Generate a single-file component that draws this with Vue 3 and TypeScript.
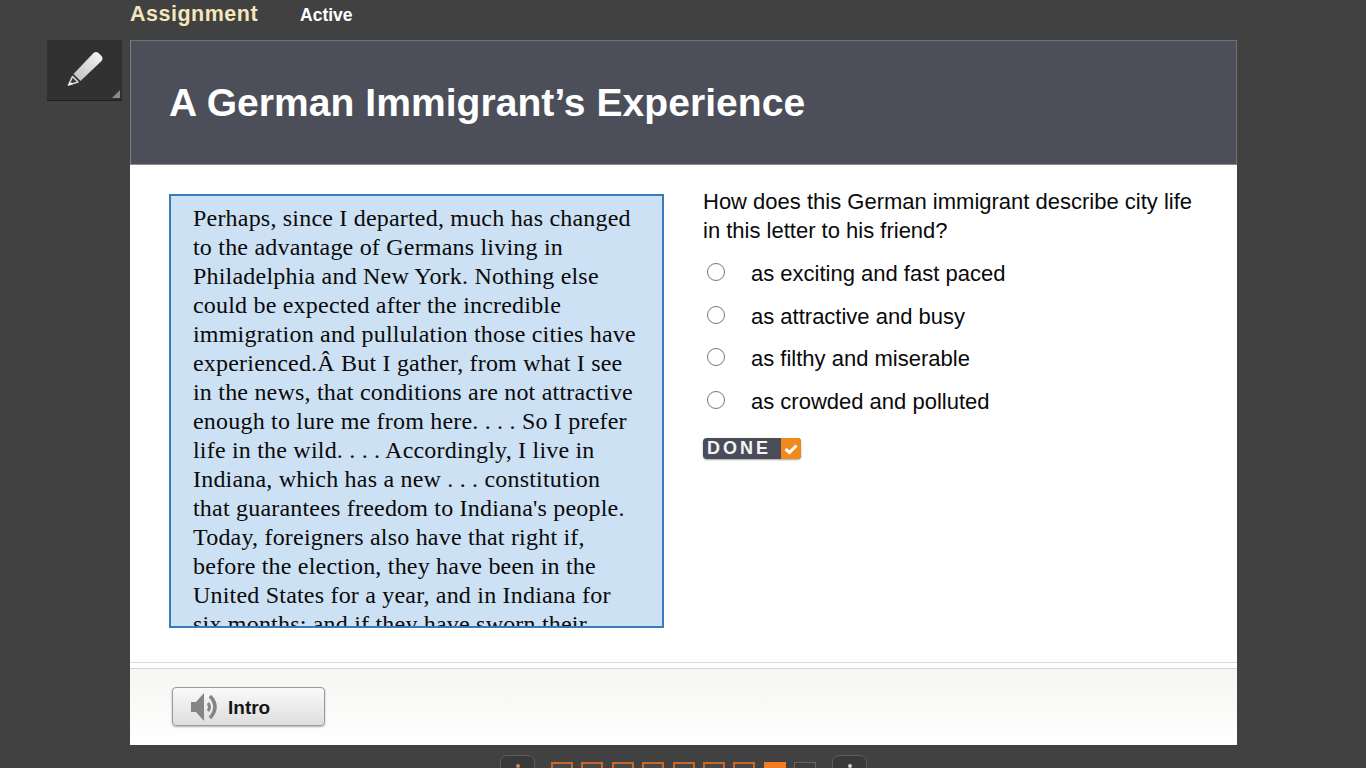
<script setup lang="ts">
const passage = [
  'Perhaps, since I departed, much has changed',
  'to the advantage of Germans living in',
  'Philadelphia and New York. Nothing else',
  'could be expected after the incredible',
  'immigration and pullulation those cities have',
  'experienced.Â But I gather, from what I see',
  'in the news, that conditions are not attractive',
  'enough to lure me from here. . . . So I prefer',
  'life in the wild. . . . Accordingly, I live in',
  'Indiana, which has a new . . . constitution',
  "that guarantees freedom to Indiana's people.",
  'Today, foreigners also have that right if,',
  'before the election, they have been in the',
  'United States for a year, and in Indiana for',
  'six months; and if they have sworn their',
]

const options = [
  'as exciting and fast paced',
  'as attractive and busy',
  'as filthy and miserable',
  'as crowded and polluted',
]

const pages = [1, 2, 3, 4, 5, 6, 7, 8, 9]
const currentPage = 8
</script>

<template>
  <div class="page">
    <div class="topbar">
      <span class="topbar-title">Assignment</span>
      <span class="topbar-status">Active</span>
    </div>

    <div class="stage">
      <div class="rail">
        <button type="button" class="tool" aria-label="Notes">
          <svg width="40" height="40" viewBox="0 0 40 40" aria-hidden="true">
            <defs>
              <linearGradient id="pencil-body" x1="0" y1="1" x2="1" y2="0">
                <stop offset="0" stop-color="#bdbdbd" />
                <stop offset="1" stop-color="#f8f8f8" />
              </linearGradient>
            </defs>
            <path d="M8.500 25 L28.500 4 Q31 1.800 33.500 4 L36.500 7 Q38.500 9.500 36.500 12 L15.500 32 Z" fill="url(#pencil-body)" />
            <path d="M7.500 27.500 L13 33 L3.500 36 Z" fill="#3a3a3a" stroke="#d8d8d8" stroke-width="1.600" stroke-linejoin="round" />
            <path d="M2.500 36.500 L6 33 L7.500 35.500 Z" fill="#eee" />
          </svg>
          <span class="tool-corner"></span>
        </button>
      </div>

      <main class="card">
        <header class="card-header">
          <h1>A German Immigrant’s Experience</h1>
        </header>

        <section class="card-body">
          <div class="passage">
            <p v-for="line in passage" :key="line">{{ line }}</p>
          </div>

          <div class="question">
            <p class="prompt">How does this German immigrant describe city life in this letter to his friend?</p>
            <label v-for="option in options" :key="option" class="option">
              <input type="radio" name="answer" />
              <span>{{ option }}</span>
            </label>
            <button type="button" class="done">
              <span class="done-label">DONE</span>
              <span class="done-check">
                <svg width="14" height="12" viewBox="0 0 14 12" aria-hidden="true">
                  <path d="M1.500 6 L5.500 9.500 L12.500 2.500" fill="none" stroke="#fff" stroke-width="3" />
                </svg>
              </span>
            </button>
          </div>
        </section>

        <footer class="card-footer">
          <button type="button" class="intro">
            <svg width="30" height="30" viewBox="0 0 30 30" aria-hidden="true">
              <path d="M1 10 H6 L14 1 V29 L6 20 H1 Z" fill="#858585" />
              <path d="M18 11 Q21 15 18 19" fill="none" stroke="#858585" stroke-width="3" />
              <path d="M20 4 Q30 15 20 26" fill="none" stroke="#858585" stroke-width="3.500" />
            </svg>
            <span class="intro-label">Intro</span>
          </button>
        </footer>
      </main>
    </div>

    <nav class="pager">
      <button type="button" class="pager-arrow" aria-label="Previous"><span class="dot dot-orange"></span></button>
      <div class="pager-pages">
        <span
          v-for="n in pages"
          :key="n"
          class="pager-page"
          :class="{ filled: n === currentPage, empty: n > currentPage }"
        ></span>
      </div>
      <button type="button" class="pager-arrow" aria-label="Next"><span class="dot"></span></button>
    </nav>
  </div>
</template>

<style>
html,
body {
  margin: 0;
  height: 100%;
  overflow: hidden;
  background: #414141;
}
</style>

<style scoped>
.page {
  height: 768px;
  overflow: hidden;
  background: #414141;
  font-family: "Liberation Sans", Arial, sans-serif;
}

.topbar {
  height: 40px;
  box-sizing: border-box;
  padding: 1px 0 0 130px;
  display: flex;
  align-items: baseline;
  gap: 42px;
}

.topbar-title {
  font-size: 21.500px;
  line-height: 26px;
  font-weight: 700;
  letter-spacing: 0.5px;
  color: #f4e6bd;
}

.topbar-status {
  font-size: 17.500px;
  font-weight: 700;
  color: #fff;
}

.stage {
  display: flex;
  padding-left: 47px;
  gap: 8px;
}

.rail {
  width: 75px;
}

.tool {
  position: relative;
  display: flex;
  align-items: center;
  justify-content: center;
  width: 75px;
  height: 61px;
  padding: 0 0 2px 0;
  background: #313131;
  border: 0;
  border-bottom: 1px solid #1d1d1d;
}

.tool-corner {
  position: absolute;
  right: 2px;
  bottom: 2px;
  border-style: solid;
  border-width: 0 0 8px 8px;
  border-color: transparent transparent #8a8a8a transparent;
}

.card {
  width: 1107px;
  height: 705px;
  display: flex;
  flex-direction: column;
  background: #fff;
}

.card-header {
  height: 125px;
  box-sizing: border-box;
  display: flex;
  align-items: center;
  padding: 0 0 0 38px;
  background: #4c4f59;
  border: 1px solid #6f727b;
  border-bottom-color: #8b8d94;
  border-left-color: #7d8088;
}

.card-header h1 {
  margin: 0;
  font-size: 39px;
  font-weight: 700;
  letter-spacing: 0.06px;
  color: #fff;
}

.card-body {
  height: 498px;
  box-sizing: border-box;
  display: flex;
  padding: 29px 0 0 39px;
  border-bottom: 1px solid #cfdde8;
}

.passage {
  width: 495px;
  height: 434px;
  box-sizing: border-box;
  flex: none;
  overflow: hidden;
  padding: 8px 0 0 22px;
  background: #cde1f5;
  border: 2px solid #3b7cb8;
  color: #0a0a0a;
  font-family: "Liberation Serif", "Times New Roman", serif;
  font-size: 24px;
  line-height: 29px;
  letter-spacing: 0.2px;
}

.passage p {
  margin: 0;
  white-space: nowrap;
}

.question {
  width: 500px;
  padding: 0 0 0 39px;
  color: #0a0a0a;
  font-size: 22px;
}

.prompt {
  margin: -7px 0 8px;
  line-height: 29px;
}

.option {
  display: flex;
  align-items: center;
  height: 42.500px;
  gap: 26px;
}

.option input {
  appearance: none;
  flex: none;
  width: 18px;
  height: 18px;
  margin: 0 0 4px 4px;
  background: #fff;
  border: 1px solid #767676;
  border-radius: 50%;
}

.done {
  display: flex;
  align-items: stretch;
  width: 98px;
  height: 21px;
  margin-top: 15px;
  padding: 0;
  overflow: hidden;
  border: 0;
  border-radius: 4px;
  background: #4a4d57;
  box-shadow: 0 1px 2px rgba(0, 0, 0, 0.35);
}

.done-label {
  flex: 1;
  padding-left: 4px;
  color: #f4f4f4;
  font-family: "Liberation Sans", Arial, sans-serif;
  font-size: 18px;
  font-weight: 700;
  line-height: 21px;
  letter-spacing: 3px;
  text-align: left;
}

.done-check {
  display: flex;
  align-items: center;
  justify-content: center;
  width: 20px;
  background: #f08a1d;
}

.card-footer {
  flex: 1;
  margin-top: 5px;
  box-sizing: border-box;
  padding: 18px 0 0 42px;
  background: linear-gradient(#f5f5f3, #fff);
  border-top: 1px solid #d5d5d5;
}

.intro {
  display: flex;
  align-items: center;
  gap: 8px;
  width: 153px;
  height: 39px;
  padding: 0 0 0 17px;
  background: linear-gradient(#fafafa, #dedede);
  border: 1px solid #9a9a9a;
  border-radius: 4px;
  box-shadow: 0 1px 2px rgba(0, 0, 0, 0.3);
  color: #161616;
  font-family: "Liberation Sans", Arial, sans-serif;
  font-size: 19px;
  font-weight: 700;
}

.intro-label {
  margin-top: 3px;
}

.pager {
  display: flex;
  align-items: flex-start;
  margin: 10px 0 0 500px;
}

.pager-arrow {
  position: relative;
  width: 35px;
  height: 40px;
  flex: none;
  padding: 0;
  background: #393939;
  border: 1px solid #5c5c5c;
  border-radius: 7px;
}

.dot {
  position: absolute;
  top: 8px;
  left: 15px;
  width: 4px;
  height: 4px;
  border-radius: 50%;
  background: #cfcfcf;
}

.dot-orange {
  background: #c98a5a;
}

.pager-pages {
  display: flex;
  gap: 8.400px;
  margin: 7px 0 0 16px;
  width: 281px;
}

.pager-page {
  width: 22px;
  height: 30px;
  flex: none;
  box-sizing: border-box;
  border: 2px solid #c8692a;
  background: #474747;
}

.pager-page.filled {
  background: #f47b20;
  border-color: #f47b20;
}

.pager-page.empty {
  background: #3d3d3d;
  border: 1px solid #666;
}
</style>
